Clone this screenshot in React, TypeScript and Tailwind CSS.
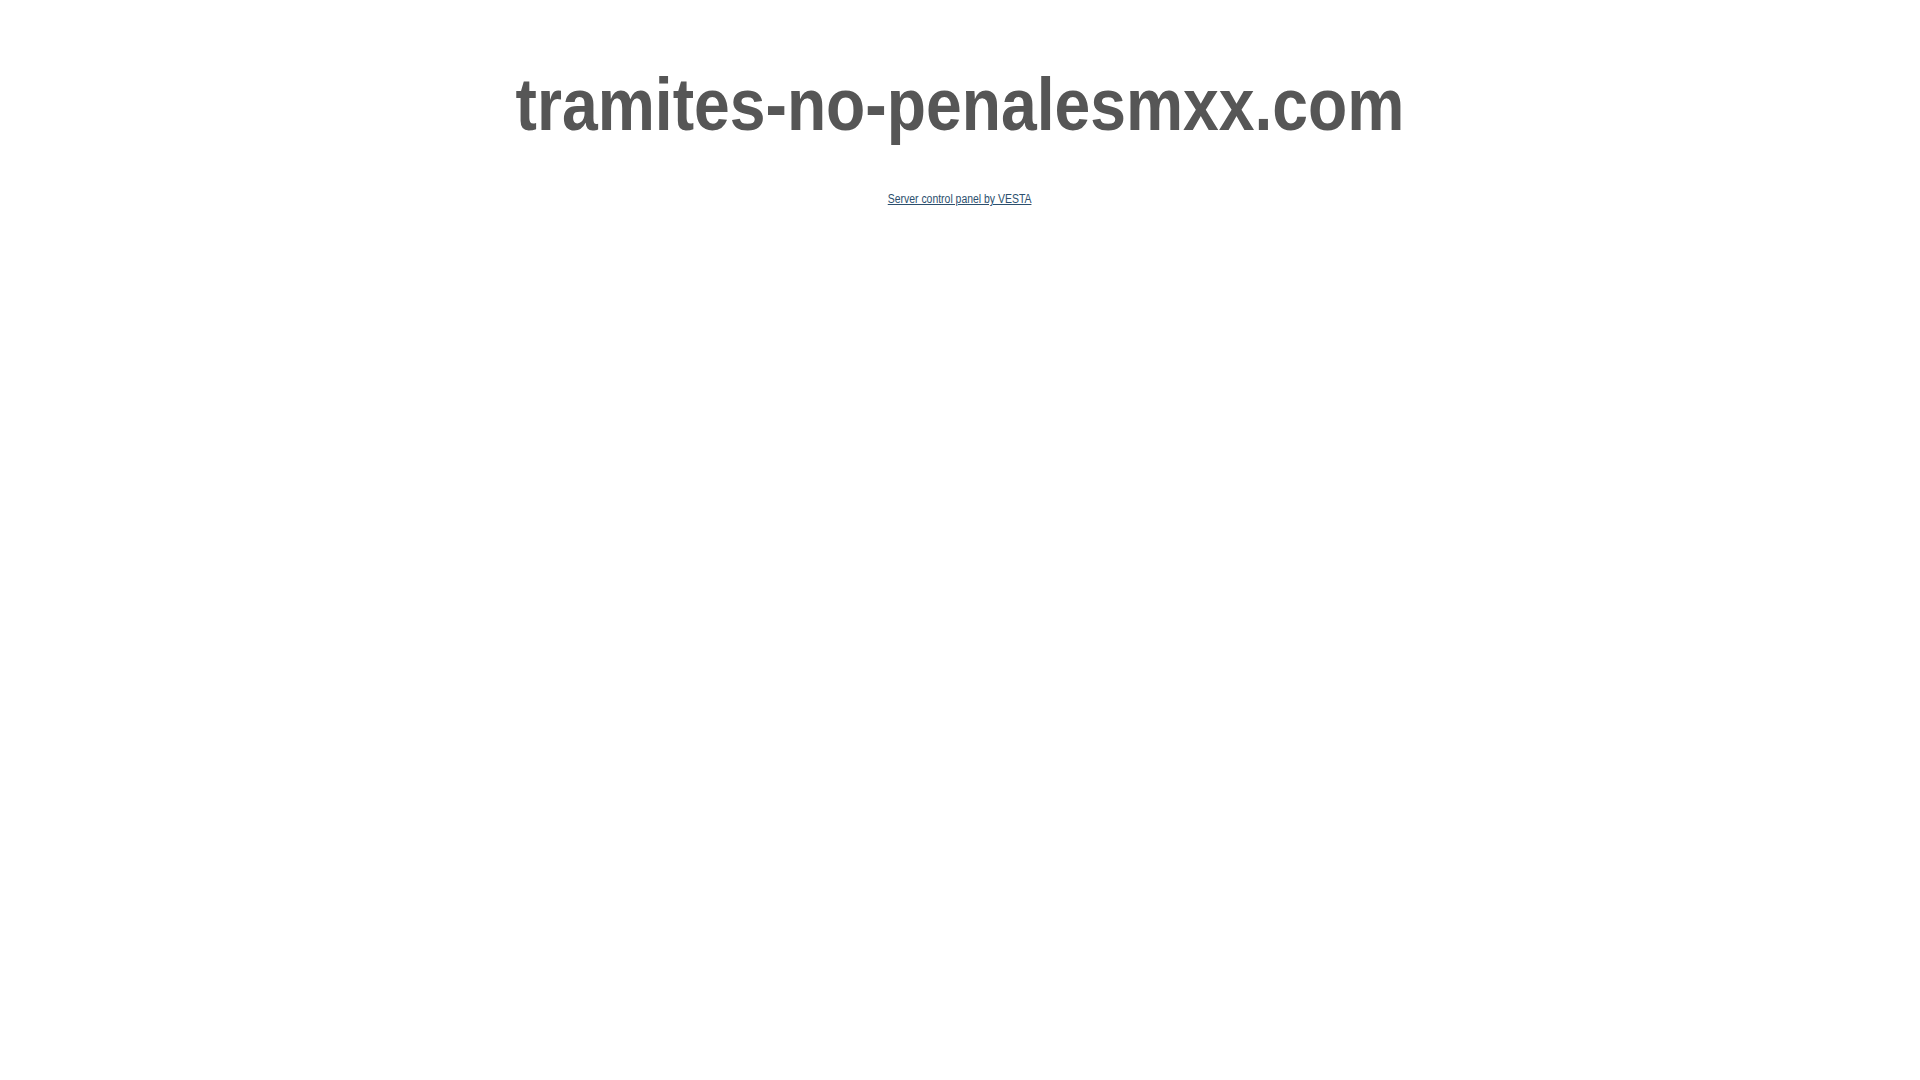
export default function App() {
  return (
    <div className="min-h-screen bg-white font-['Liberation_Sans',Arial,sans-serif]">
      <div className="flex flex-col items-center pt-[64px]">
        <h1 className="origin-center scale-x-[0.868] text-[74px] leading-[82px] font-bold text-[#565656]">
          tramites-no-penalesmxx.com
        </h1>
        <a
          href="#"
          className="mt-[46px] origin-center scale-x-[0.87] text-[12px] leading-[14px] text-[#2c4f6e] underline"
        >
          Server control panel by VESTA
        </a>
      </div>
    </div>
  )
}
